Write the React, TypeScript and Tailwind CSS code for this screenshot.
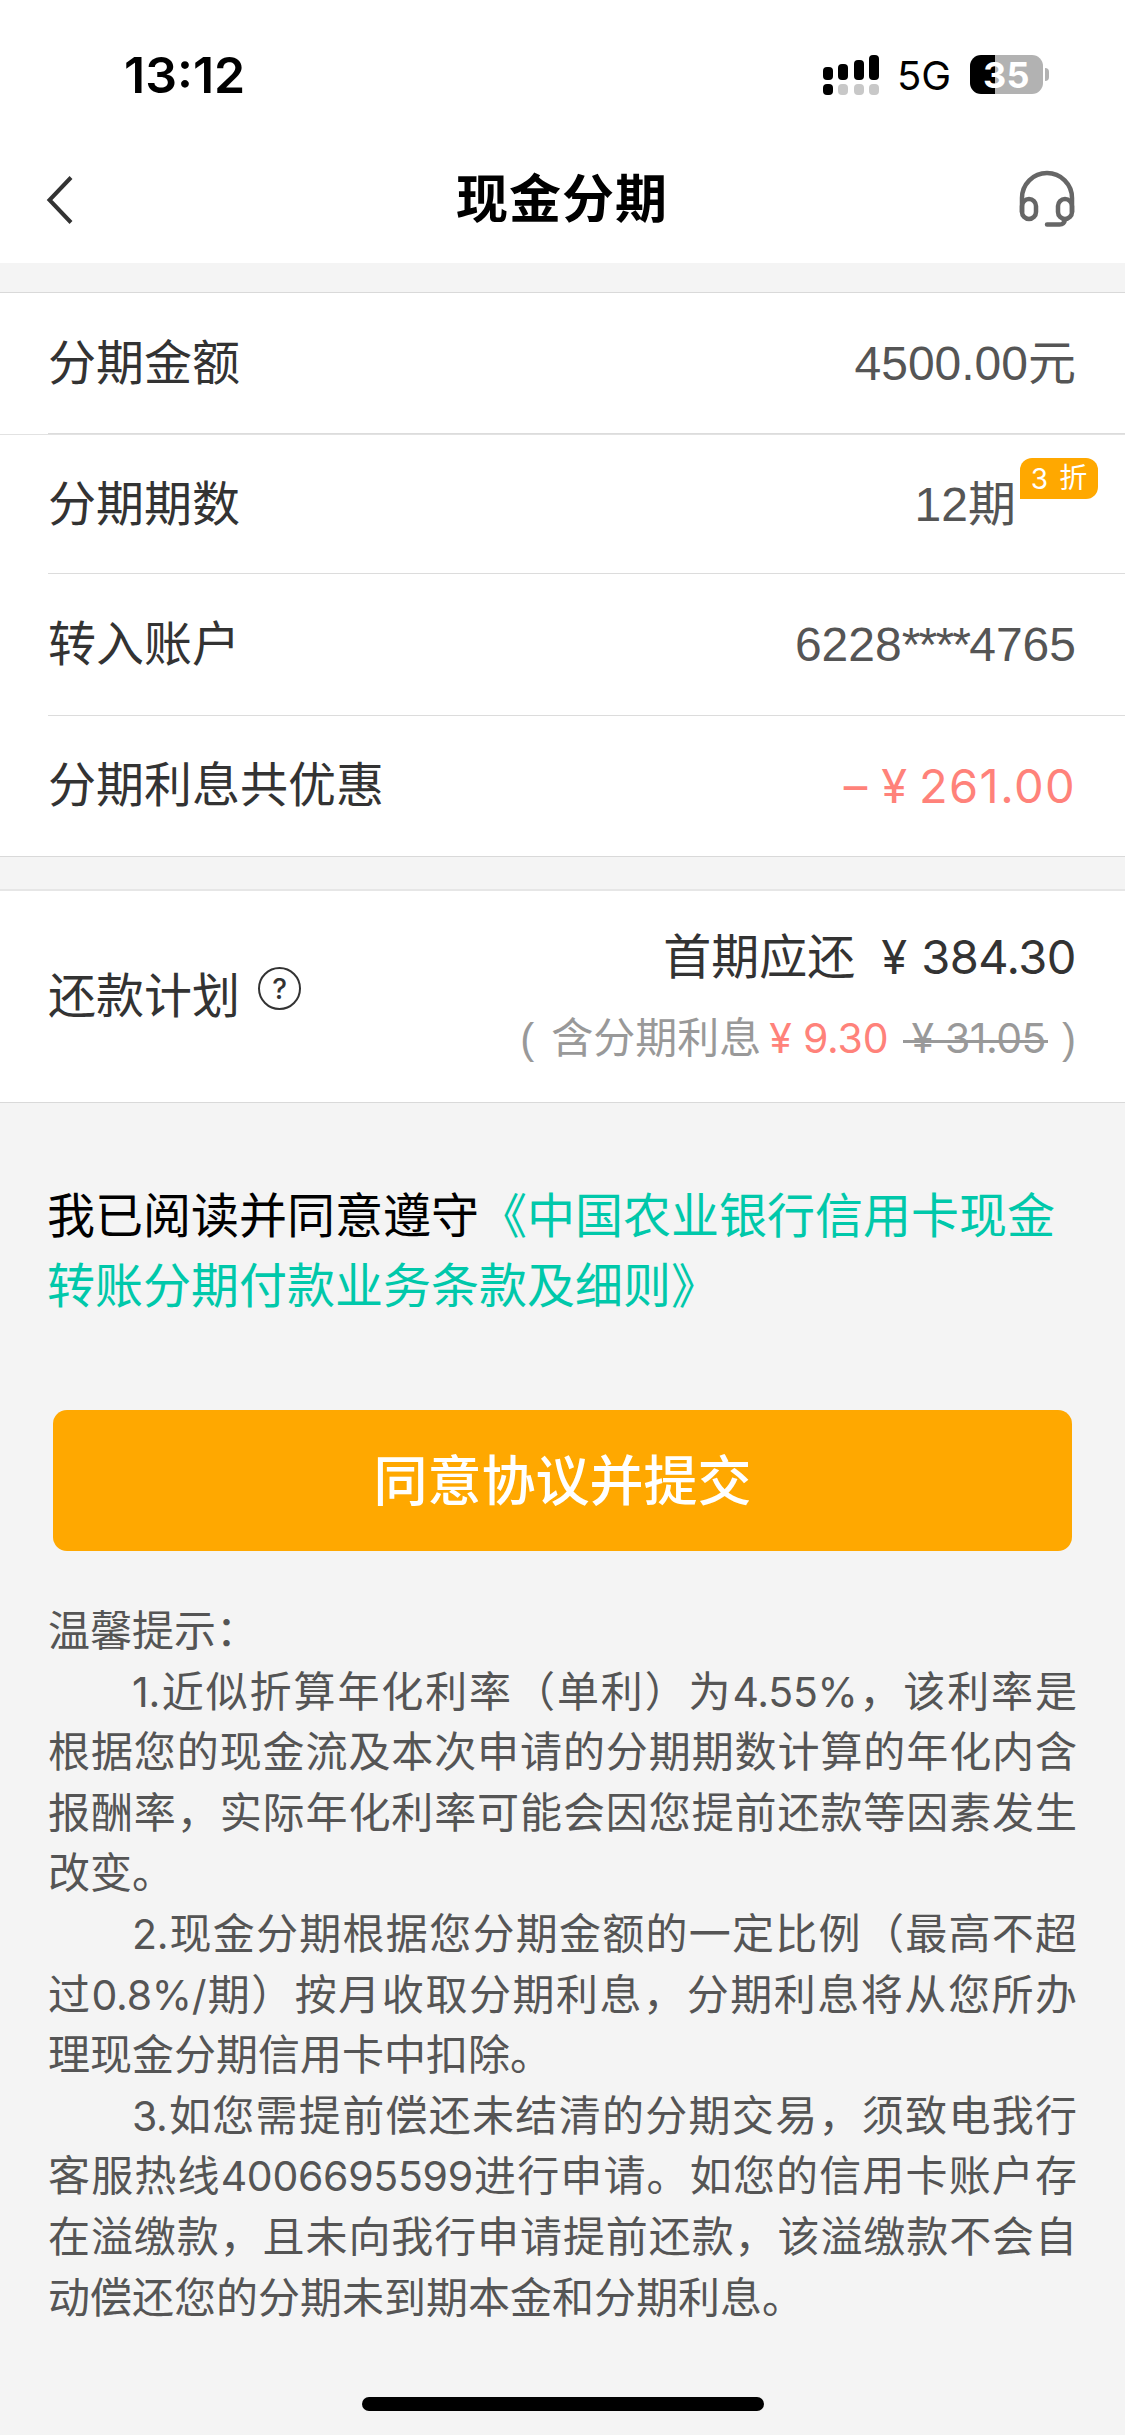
import type { ReactNode } from "react";

const agreement = ["《中国农业银行信用卡现金", "转账分期付款业务条款及细则》"];

// every tip is already split into lines, the last line of a tip is not justified
const tips = [
  [
    "1.近似折算年化利率（单利）为4.55%，该利率是",
    "根据您的现金流及本次申请的分期期数计算的年化内含",
    "报酬率，实际年化利率可能会因您提前还款等因素发生",
    "改变。",
  ],
  [
    "2.现金分期根据您分期金额的一定比例（最高不超",
    "过0.8%/期）按月收取分期利息，分期利息将从您所办",
    "理现金分期信用卡中扣除。",
  ],
  [
    "3.如您需提前偿还未结清的分期交易，须致电我行",
    "客服热线4006695599进行申请。如您的信用卡账户存",
    "在溢缴款，且未向我行申请提前还款，该溢缴款不会自",
    "动偿还您的分期未到期本金和分期利息。",
  ],
];

const StatusBar = () => (
  <div className="flex h-[137px] items-center justify-between pl-[124px] pr-[76px] pt-[12px] font-['Inter',sans-serif]">
    <span className="pt-[1px] text-[50px] font-semibold leading-none">13:12</span>
    <div className="flex items-center">
      <svg width="56" height="40" viewBox="0 0 56 40">
        <rect x="0" y="12" width="10" height="13" rx="4" />
        <rect x="15" y="9" width="10" height="16" rx="4" />
        <rect x="31" y="5" width="10" height="20" rx="4" />
        <rect x="46" y="0" width="10" height="25" rx="4" />
        <rect x="0" y="29" width="10" height="11" rx="4" />
        <g fill="#c8c8c8">
          <rect x="15" y="29" width="10" height="11" rx="4" />
          <rect x="31" y="29" width="10" height="11" rx="4" />
          <rect x="46" y="29" width="10" height="11" rx="4" />
        </g>
      </svg>
      <span className="ml-[18px] w-[73px] pt-[3px] text-[40px] leading-none">5G</span>
      <div className="flex h-[39px] w-[73px] items-center justify-center rounded-[11px] bg-[linear-gradient(to_right,#000_25px,#b2b2b2_25px)] text-[36px] font-bold leading-none tracking-[0.500px] text-white">
        35
      </div>
      <div className="ml-[2px] h-[13px] w-[4px] rounded-r-full bg-[#b2b2b2]" />
    </div>
  </div>
);

const NavBar = () => (
  <div className="flex h-[126px] items-center justify-between pl-[45px] pr-[48px]">
    <svg width="60" height="56" viewBox="0 0 60 56" fill="none" stroke="#333" strokeWidth="4">
      <path d="M26 5.500 L4.500 28 L26 50.500" />
    </svg>
    <h1 className="pl-[2px] text-[52px] font-semibold leading-none tracking-[1px]">现金分期</h1>
    <svg
      width="60"
      height="60"
      viewBox="0 0 60 60"
      fill="none"
      stroke="#666"
      strokeWidth="4.500"
      strokeLinecap="round"
    >
      <path d="M5 42V28a25 25 0 0 1 50 0v14" />
      <rect x="5" y="29" width="14" height="20" rx="7" />
      <rect x="41" y="29" width="14" height="20" rx="7" />
      <path d="M48 49.500c-.5 3.500-2.500 5-5.500 5H30" />
    </svg>
  </div>
);

const Row = ({ label, children }: { label: string; children: ReactNode }) => (
  <div className="flex flex-1 items-center justify-between pr-[49px] pt-[1px] text-[#555]">
    <span className="text-[#333]">{label}</span>
    {children}
  </div>
);

// latin runs are set in a rounder face than the chinese text around them
const TipLine = ({ text }: { text: string }) => (
  <>
    {text.split(/([0-9.%/]+)/).map((part, i) =>
      i % 2 ? (
        <span
          key={i}
          className="font-['Inter',sans-serif] text-[41px] leading-none tracking-[-0.300px]"
        >
          {part}
        </span>
      ) : (
        part
      )
    )}
  </>
);

const App = () => {
  return (
    <div className="flex h-[2435px] w-[1125px] flex-col bg-[#f4f4f4] font-['Liberation_Sans','Noto_Sans_CJK_SC',sans-serif] text-black">
      <header className="bg-white">
        <StatusBar />
        <NavBar />
      </header>

      {/* Installment details */}
      <section className="mt-[29px] flex h-[565px] flex-col border-y border-[#d9d9d9] bg-white text-[48px] leading-none">
        <div className="flex h-[142px] border-b border-[#e2e2e2] pl-[48px]">
          <div className="flex flex-1 border-b border-[#dcdcdc]">
            <Row label="分期金额">
              <span>4500.00元</span>
            </Row>
          </div>
        </div>
        <div className="ml-[48px] flex h-[139px] border-b border-[#dcdcdc]">
          <Row label="分期期数">
            <span className="relative mr-[60px]">
              12期
              <span className="absolute -top-[23px] left-full ml-[4px] flex h-[41px] w-[78px] items-center justify-center whitespace-pre rounded-xl rounded-bl-none bg-[#ffa800] pt-[2px] text-[28px] text-white">
                <span className="mr-[11px] font-['Inter',sans-serif]">3</span>折
              </span>
            </span>
          </Row>
        </div>
        <div className="ml-[48px] flex h-[142px] border-b border-[#dcdcdc]">
          <Row label="转入账户">
            <span>
              6228<span className="tracking-[-1.800px]">****</span>4765
            </span>
          </Row>
        </div>
        <div className="ml-[48px] flex flex-1 pb-[2px]">
          <Row label="分期利息共优惠">
            <span className="flex font-['Inter',sans-serif] text-[47px] text-[#ff827a]">
              <span>–</span>
              <span className="ml-[14px]">¥</span>
              <span className="ml-[12px] tracking-[1.400px]">261.00</span>
            </span>
          </Row>
        </div>
      </section>

      {/* Repayment plan */}
      <section className="mt-[32px] flex h-[214px] items-center justify-between border-b border-t-2 border-b-[#d9d9d9] border-t-[#e6e6e6] bg-white pl-[48px] pr-[49px] text-[#333]">
        <div className="flex items-center text-[48px] leading-none">
          <span>还款计划</span>
          <span className="mb-[16px] ml-[18px] flex h-[43px] w-[43px] items-center justify-center rounded-full border-[2.500px] border-[#333] font-['Inter',sans-serif] text-[28px] font-medium">
            ?
          </span>
        </div>
        <div className="flex flex-col items-end pt-[3px]">
          <div className="flex items-baseline text-[48px] leading-[80px]">
            首期应还
            <span className="ml-[26px] flex font-['Inter',sans-serif] text-[47px]">
              ¥<span className="ml-[14px] tracking-[-0.500px]">384.30</span>
            </span>
          </div>
          <div className="flex items-baseline text-[42px] leading-[80px] text-[#999]">
            <span>(</span>
            <span className="ml-[17px]">含分期利息</span>
            <span className="ml-[8px] font-['Inter',sans-serif] text-[41px] text-[#ff827a]">¥</span>
            <span className="ml-[11px] font-['Inter',sans-serif] text-[41px] tracking-[-0.200px] text-[#ff827a]">
              9.30
            </span>
            <span className="ml-[15px] flex bg-[linear-gradient(#999,#999)] bg-[length:100%_3px] bg-[position:0_42px] bg-no-repeat pl-[8px] pr-[2px] font-['Inter',sans-serif] text-[41px]">
              ¥<span className="ml-[11px] tracking-[-0.500px]">31.05</span>
            </span>
            <span className="ml-[14px]">)</span>
          </div>
        </div>
      </section>

      <p className="mt-[79px] pl-[47px] text-[48px] leading-[70px]">
        我已阅读并同意遵守
        <span className="text-[#00c8aa]">
          {agreement[0]}
          <br />
          {agreement[1]}
        </span>
      </p>

      <button className="mx-[53px] mt-[88px] h-[141px] rounded-[14px] bg-[#ffa800] pt-[2px] text-[54px] font-medium leading-none text-white">
        同意协议并提交
      </button>

      {/* Tips */}
      <div className="mx-[48px] mt-[51px] text-[42px] leading-[60.600px] text-[#555]">
        <p>温馨提示：</p>
        {tips.map((lines) =>
          lines.map((line, i) => (
            <p
              key={line}
              className={`whitespace-nowrap ${i === 0 ? "indent-[84px]" : ""} ${
                i < lines.length - 1 ? "[text-align-last:justify]" : ""
              }`}
            >
              <TipLine text={line} />
            </p>
          ))
        )}
      </div>

      <div className="mb-[24px] ml-[362px] mt-auto h-[14px] w-[402px] rounded-full bg-black" />
    </div>
  );
};

export default App;
